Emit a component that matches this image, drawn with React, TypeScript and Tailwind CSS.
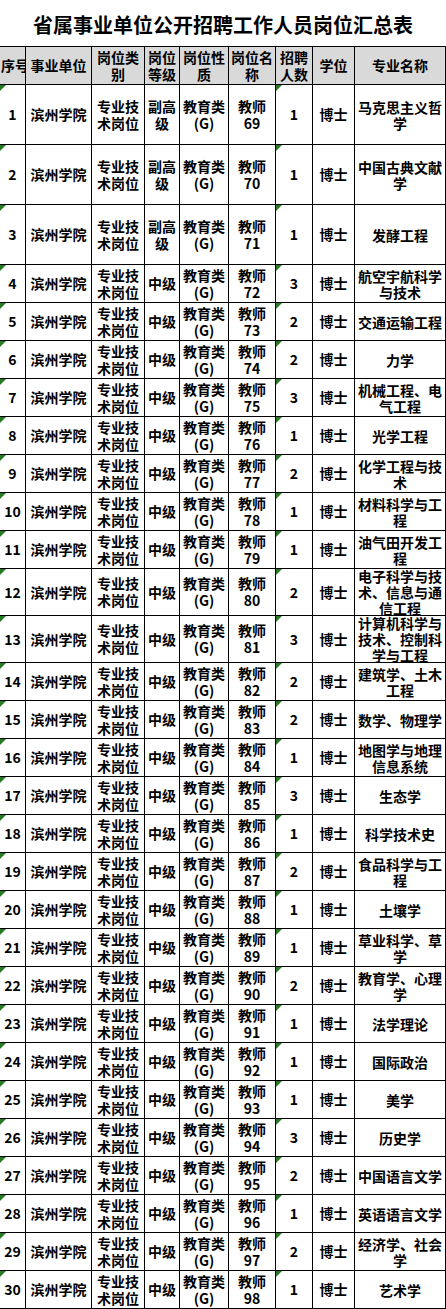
const FONT = "font-['Noto_Sans_CJK_SC','Noto_Sans',sans-serif]";

type Row = {
  level: string;
  post: string;
  count: string;
  major: string;
  h: string;
};

const majors: [string, string, string][] = [
  ['69', '1', '马克思主义哲学'],
  ['70', '1', '中国古典文献学'],
  ['71', '1', '发酵工程'],
  ['72', '3', '航空宇航科学与技术'],
  ['73', '2', '交通运输工程'],
  ['74', '2', '力学'],
  ['75', '3', '机械工程、电气工程'],
  ['76', '1', '光学工程'],
  ['77', '2', '化学工程与技术'],
  ['78', '1', '材料科学与工程'],
  ['79', '1', '油气田开发工程'],
  ['80', '2', '电子科学与技术、信息与通信工程'],
  ['81', '3', '计算机科学与技术、控制科学与工程'],
  ['82', '2', '建筑学、土木工程'],
  ['83', '2', '数学、物理学'],
  ['84', '1', '地图学与地理信息系统'],
  ['85', '3', '生态学'],
  ['86', '1', '科学技术史'],
  ['87', '2', '食品科学与工程'],
  ['88', '1', '土壤学'],
  ['89', '1', '草业科学、草学'],
  ['90', '2', '教育学、心理学'],
  ['91', '1', '法学理论'],
  ['92', '1', '国际政治'],
  ['93', '1', '美学'],
  ['94', '3', '历史学'],
  ['95', '2', '中国语言文学'],
  ['96', '1', '英语语言文学'],
  ['97', '2', '经济学、社会学'],
  ['98', '1', '艺术学'],
];

const rows: Row[] = majors.map(([post, count, major], i) => ({
  level: i < 3 ? '副高级' : '中级',
  post,
  count,
  major,
  h: i < 3 ? 'h-[60px]' : i === 11 || i === 12 ? 'h-[47px]' : 'h-[38px]',
}));

// little green "number stored as text" flag in the cell corner
function Flag() {
  return (
    <svg className="absolute left-0 top-0" width="6" height="6" viewBox="0 0 6 6">
      <polygon points="0,0 6,0 0,6" fill="#237a23" />
    </svg>
  );
}

function Cell({
  children,
  h,
  flag,
  head,
  className = 'leading-[17px]',
}: {
  children: React.ReactNode;
  h: string;
  flag?: boolean;
  head?: boolean;
  className?: string;
}) {
  return (
    <div
      className={`relative flex items-center justify-center overflow-hidden border-r border-b border-black text-center ${h} ${
        head ? 'bg-[#d9d9d9]' : 'bg-white'
      } ${className}`}
    >
      {flag && <Flag />}
      <span>{children}</span>
    </div>
  );
}

export default function App() {
  const head = 'h-[38px]';
  return (
    <div className={`w-[446px] bg-white text-black font-bold text-[14px] ${FONT}`}>
      <div className="flex h-[46px] items-center justify-center pt-[4px] text-[20px]">
        省属事业单位公开招聘工作人员岗位汇总表
      </div>
      <div className="grid grid-cols-[26px_66px_53px_35px_49px_47px_37px_42px_91px] border-t border-black">
        <Cell h={head} head className="justify-start whitespace-nowrap pl-[1px] leading-[17px]">序号</Cell>
        <Cell h={head} head>事业单位</Cell>
        <Cell h={head} head>岗位类别</Cell>
        <Cell h={head} head>岗位等级</Cell>
        <Cell h={head} head>岗位性质</Cell>
        <Cell h={head} head>岗位名称</Cell>
        <Cell h={head} head>招聘人数</Cell>
        <Cell h={head} head>学位</Cell>
        <Cell h={head} head>专业名称</Cell>

        {rows.map((r, i) => (
          <div key={i} className="contents">
            <Cell h={r.h} flag className="whitespace-nowrap">{i + 1}</Cell>
            <Cell h={r.h}>滨州学院</Cell>
            <Cell h={r.h}>专业技术岗位</Cell>
            <Cell h={r.h}>{r.level}</Cell>
            <Cell h={r.h}>
              教育类
              <br />
              (G)
            </Cell>
            <Cell h={r.h}>
              教师
              <br />
              {r.post}
            </Cell>
            <Cell h={r.h} flag>{r.count}</Cell>
            <Cell h={r.h}>博士</Cell>
            <Cell h={r.h} className="leading-[16px]">{r.major}</Cell>
          </div>
        ))}
      </div>
    </div>
  );
}
